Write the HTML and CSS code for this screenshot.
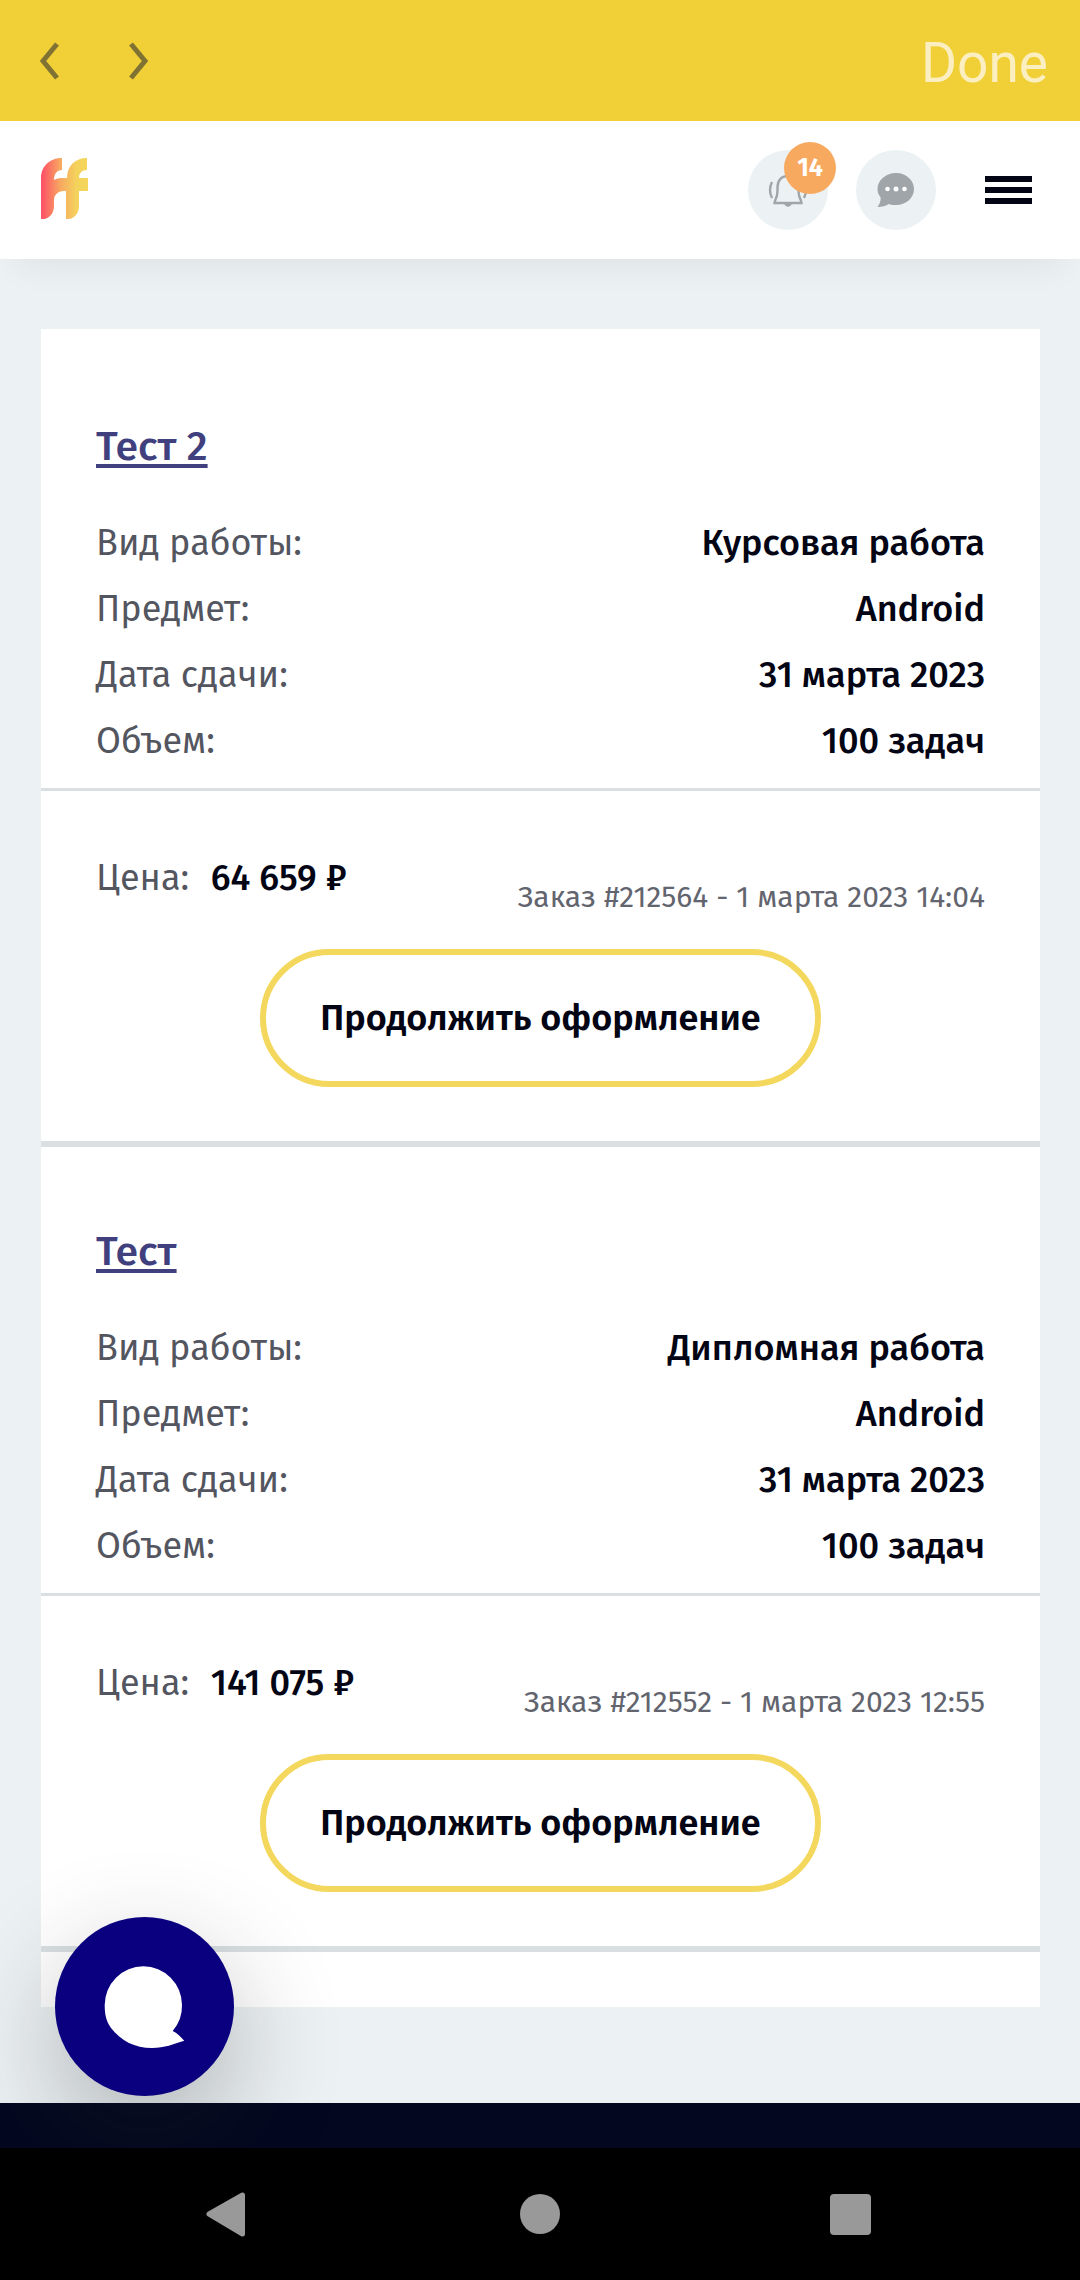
FILE: index.html
```html
<!DOCTYPE html>
<html lang="ru">
<head>
<title>Мои заказы</title>
<meta charset="utf-8">
<meta name="viewport" content="width=device-width, initial-scale=1">
<link rel="stylesheet" href="styles.css">
</head>
<body>

<!-- Browser toolbar -->
<div class="toolbar">
  <div class="toolbar-arrows">
    <button type="button" class="arrow" aria-label="Back">
      <svg width="20" height="40" viewBox="0 0 20 40"><path d="M17 3L3 20L17 37"/></svg>
    </button>
    <button type="button" class="arrow" aria-label="Forward">
      <svg width="20" height="40" viewBox="0 0 20 40"><path d="M3 3L17 20L3 37"/></svg>
    </button>
  </div>
  <button type="button" class="done">Done</button>
</div>

<header class="header">
  <a href="#" class="logo" aria-label="На главную">
    <svg width="47" height="61" viewBox="0 0 47 61">
      <defs>
        <linearGradient id="logoFill" x1="0" y1="0" x2="1" y2="0">
          <stop offset="0.04" stop-color="#fc5566"/>
          <stop offset="0.4" stop-color="#f8a662"/>
          <stop offset="0.75" stop-color="#f4d25c"/>
          <stop offset="1" stop-color="#f5d75c"/>
        </linearGradient>
      </defs>
      <path fill="url(#logoFill)" d="M0 20C0 8 9 0 21 0V12C16 12 13 16 13 22C15 21 17 20 20 20H26C26 8 34 0 46 0V12C41 12 38 15 38 20H47V33H38V48C38 55 34 60 28 61H25V33H23C17 33 13 37 13 42V48C13 55 9 60 3 61H0Z"/>
    </svg>
  </a>
  <div class="header-tools">
    <button type="button" class="round" aria-label="Уведомления">
      <svg width="40" height="40" viewBox="0 0 40 40" fill="none" stroke="#9fa5a8" stroke-width="2.4">
        <path d="M20 6C13 6 9.500 11 9.500 17.500V21C9.500 28 6.500 30 6.500 33H33.500C33.500 30 30.500 28 30.500 21V17.500C30.500 11 27 6 20 6Z"/>
        <path d="M4 12Q0 20 4 28M36 12Q40 20 36 28"/>
        <path fill="#9fa5a8" stroke="none" d="M16 33H24C23 38 17 38 16 33Z"/>
      </svg>
      <span class="badge">14</span>
    </button>
    <button type="button" class="round" aria-label="Сообщения">
      <svg width="40" height="40" viewBox="0 0 40 40" fill="#9fa5a8">
        <path d="M20 3C30 3 38 10 38 19C38 28 30 35 20 35C17 35 15 35 13 34C10 36 6 37 1.500 37C4 34 5 30 4.500 27C2.500 25 1.500 22 1.500 19C1.500 10 10 3 20 3Z"/>
        <g fill="#fff">
          <circle cx="11.500" cy="19" r="2.300"/>
          <circle cx="20" cy="19" r="2.500"/>
          <circle cx="28.500" cy="19" r="2.300"/>
        </g>
      </svg>
    </button>
    <button type="button" class="menu" aria-label="Меню">
      <span></span>
      <span></span>
      <span></span>
    </button>
  </div>
</header>

<main class="content">
  <div class="orders">

    <article class="order">
      <div class="order-info">
        <h2><a href="#">Тест 2</a></h2>
        <dl>
          <div><dt>Вид работы:</dt><dd>Курсовая работа</dd></div>
          <div><dt>Предмет:</dt><dd>Android</dd></div>
          <div><dt>Дата сдачи:</dt><dd>31 марта 2023</dd></div>
          <div><dt>Объем:</dt><dd>100 задач</dd></div>
        </dl>
      </div>
      <div class="order-bottom">
        <div class="order-summary">
          <p class="price">Цена: <b>64 659 ₽</b></p>
          <p class="number">Заказ #212564 - 1 марта 2023 14:04</p>
        </div>
        <button type="button" class="btn">Продолжить оформление</button>
      </div>
    </article>

    <article class="order">
      <div class="order-info">
        <h2><a href="#">Тест</a></h2>
        <dl>
          <div><dt>Вид работы:</dt><dd>Дипломная работа</dd></div>
          <div><dt>Предмет:</dt><dd>Android</dd></div>
          <div><dt>Дата сдачи:</dt><dd>31 марта 2023</dd></div>
          <div><dt>Объем:</dt><dd>100 задач</dd></div>
        </dl>
      </div>
      <div class="order-bottom">
        <div class="order-summary">
          <p class="price">Цена: <b>141 075 ₽</b></p>
          <p class="number">Заказ #212552 - 1 марта 2023 12:55</p>
        </div>
        <button type="button" class="btn">Продолжить оформление</button>
      </div>
    </article>

  </div>
</main>

<footer class="footer"></footer>

<button type="button" class="chat" aria-label="Открыть чат">
  <svg width="179" height="179" viewBox="0 0 179 179">
    <path fill="#fff" d="M117.700 114A38.600 38.600 0 0 0 127 88A38.600 38.600 0 0 0 49.700 88C49.700 97 51 104 56 111C66 124 80 131 97 131C110 131 118 127 129.300 123.700C126 120 122 116 117.700 114Z"/>
  </svg>
</button>

<!-- System buttons -->
<nav class="system">
  <button type="button" aria-label="Назад">
    <svg width="46" height="46" viewBox="0 0 46 46"><path d="M4 23L37.500 4V43Z" stroke="#999" stroke-width="5" stroke-linejoin="round"/></svg>
  </button>
  <button type="button" aria-label="Домой">
    <svg width="46" height="46" viewBox="0 0 46 46"><circle cx="23" cy="23" r="20"/></svg>
  </button>
  <button type="button" aria-label="Недавние">
    <svg width="46" height="46" viewBox="0 0 46 46"><rect x="1" y="3" width="41" height="41" rx="4"/></svg>
  </button>
</nav>

</body>
</html>
```
FILE: styles.css
```css
* {
  box-sizing: border-box;
}

body {
  margin: 0;
  min-height: 100vh;
  display: flex;
  flex-direction: column;
  font-family: "Fira Sans", "Noto Sans", sans-serif;
  font-size: 36px;
  color: #030514;
  background-color: #ecf1f4;
}

button {
  padding: 0;
  border: none;
  background: none;
  font-family: inherit;
  color: inherit;
  cursor: pointer;
}

svg {
  display: block;
}

h2, p, dl, dd {
  margin: 0;
}

/* Browser toolbar */
.toolbar {
  display: flex;
  justify-content: space-between;
  align-items: center;
  height: 121px;
  padding: 0 32px 0 40px;
  background-color: #f0d036;
}

.toolbar-arrows {
  display: flex;
  gap: 68px;
}

.arrow svg {
  fill: none;
  stroke: #7f7233;
  stroke-width: 5;
}

.done {
  padding-top: 4px;
  font-family: Roboto, sans-serif;
  font-size: 55px;
  color: #fbefc2;
}

/* Site header */
.header {
  display: flex;
  justify-content: space-between;
  align-items: center;
  height: 138px;
  padding: 0 48px 0 41px;
  background-color: #fff;
  box-shadow: 0 24px 32px -16px rgba(0, 0, 0, 0.06);
}

.logo {
  margin-bottom: 4px;
}

.header-tools {
  display: flex;
  align-items: center;
  gap: 28px;
}

.round {
  position: relative;
  display: flex;
  justify-content: center;
  align-items: center;
  width: 80px;
  height: 80px;
  border-radius: 50%;
  background-color: #ecf2f4;
}

.badge {
  position: absolute;
  top: -8px;
  right: -8px;
  width: 52px;
  height: 52px;
  border-radius: 50%;
  background-color: #f7a960;
  color: #fff;
  font-size: 25px;
  font-weight: bold;
  line-height: 52px;
  text-align: center;
}

.menu {
  display: flex;
  flex-direction: column;
  gap: 5px;
  margin-left: 21px;
}

.menu span {
  width: 47px;
  height: 6px;
  background-color: #030514;
}

/* Orders */
.content {
  padding: 70px 40px 96px 41px;
}

.orders {
  padding: 13px 0 55px;
  background-color: #fff;
}

.order {
  border-bottom: 6px solid #dae0e2;
}

.order-info {
  padding: 78px 55px 14px;
  border-bottom: 3px solid #dae0e2;
}

.order h2 {
  margin-bottom: 36px;
  font-size: 41px;
  font-weight: 500;
  line-height: 54px;
}

.order h2 a {
  color: #41407e;
  text-decoration-thickness: 4px;
  text-underline-offset: 4px;
}

.order dl div {
  display: flex;
  justify-content: space-between;
  line-height: 66px;
}

.order dt {
  color: #53555f;
}

.order dd {
  font-weight: 500;
}

.order-bottom {
  padding: 54px 55px;
  text-align: center;
}

.order-summary {
  display: flex;
  justify-content: space-between;
  align-items: flex-start;
  margin-bottom: 31px;
}

.price {
  color: #53555f;
  line-height: 66px;
}

.price b {
  margin-left: 12px;
  color: #030514;
  font-weight: 500;
}

.number {
  padding-top: 31px;
  font-size: 30px;
  line-height: 42px;
  color: #62646e;
}

.btn {
  height: 138px;
  padding: 0 54px;
  border: 6px solid #f4d75d;
  border-radius: 69px;
  font-size: 36px;
  font-weight: 600;
}

/* Footer */
.footer {
  flex: 1;
  min-height: 45px;
  background-color: #030820;
}

.chat {
  position: fixed;
  left: 55px;
  bottom: 184px;
  border-radius: 50%;
  background-color: #0a007f;
  box-shadow: 0 40px 110px rgba(34, 34, 34, 0.3);
}

.system {
  position: relative;
  display: flex;
  justify-content: space-between;
  align-items: center;
  height: 132px;
  padding: 0 205px;
  background-color: #000;
}

.system svg {
  fill: #999;
}
```
